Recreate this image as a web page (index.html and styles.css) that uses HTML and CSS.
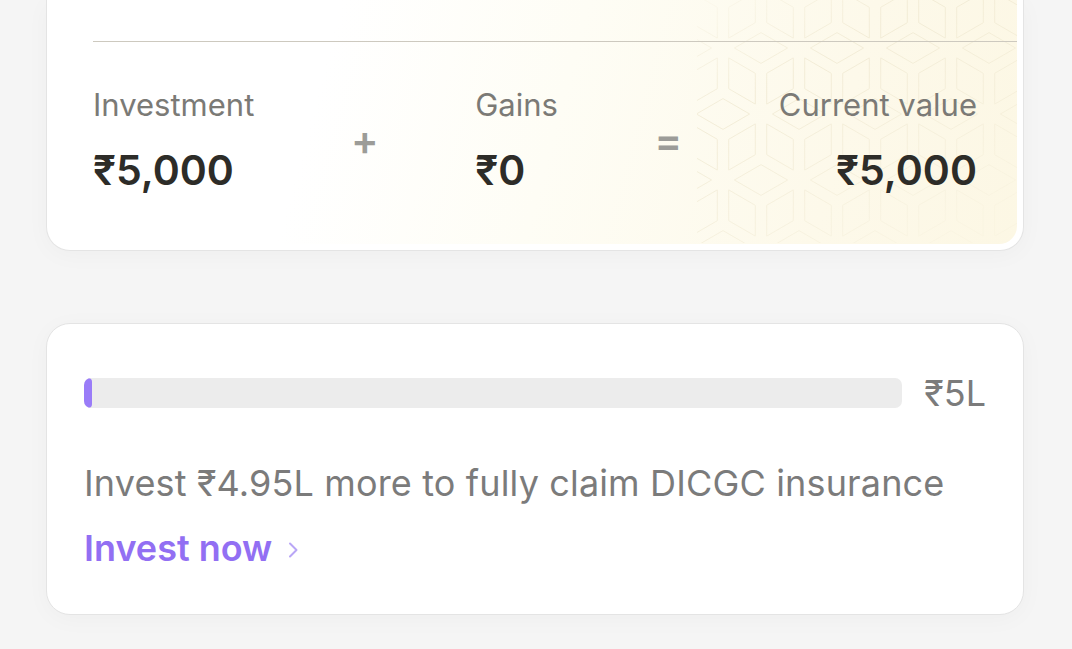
FILE: index.html
```html
<!DOCTYPE html>
<html>
<head>
<meta charset="utf-8">
<link rel="stylesheet" href="styles.css">
</head>
<body>
<div class="page">
  <section class="card summary">
    <div class="panel">
      <svg class="pattern" width="320" height="243" viewBox="0 0 320 243" aria-hidden="true">
        <defs>
          <pattern id="cubes" width="76" height="132" patternUnits="userSpaceOnUse" x="64" y="70">
            <g id="hexes" fill="none" stroke="#efe8d0" stroke-width="1">
              <g id="hx">
                <path d="M0 -37.4 L26.6 -22 L0 -6.6 L-26.6 -22 Z"/>
                <path d="M-32.3 -12.1 L-5.7 3.3 L-5.7 34.1 L-32.3 18.7 Z"/>
                <path d="M32.3 -12.1 L5.7 3.3 L5.7 34.1 L32.3 18.7 Z"/>
              </g>
              <use href="#hx" x="76" y="0"/>
              <use href="#hx" x="38" y="66"/>
              <use href="#hx" x="0" y="132"/>
              <use href="#hx" x="76" y="132"/>
            </g>
          </pattern>
          <linearGradient id="fade" x1="0" y1="0" x2="0.7" y2="1">
            <stop offset="0" stop-color="#fff" stop-opacity="0.1"/>
            <stop offset="0.35" stop-color="#fff" stop-opacity="0.75"/>
            <stop offset="0.7" stop-color="#fff" stop-opacity="0.5"/>
            <stop offset="1" stop-color="#fff" stop-opacity="0.15"/>
          </linearGradient>
          <mask id="m">
            <rect width="320" height="243" fill="url(#fade)"/>
          </mask>
        </defs>
        <rect width="320" height="243" fill="url(#cubes)" mask="url(#m)"/>
      </svg>
      <div class="divider"></div>
      <div class="sum-row">
        <div class="col">
          <div class="label">Investment</div>
          <div class="value">₹5,000</div>
        </div>
        <div class="op">+</div>
        <div class="col">
          <div class="label">Gains</div>
          <div class="value">₹0</div>
        </div>
        <div class="op">=</div>
        <div class="col right">
          <div class="label">Current value</div>
          <div class="value">₹5,000</div>
        </div>
      </div>
    </div>
  </section>

  <section class="card insure">
    <div class="progress-row">
      <div class="track"><div class="fill" style="width:1%"></div></div>
      <div class="limit">₹5L</div>
    </div>
    <p class="note">Invest ₹4.95L more to fully claim DICGC insurance</p>
    <a class="cta" href="#">Invest now <span class="chev"><svg width="14" height="20" viewBox="0 0 14 20"><path d="M4 3.5 L10.5 10 L4 16.5" fill="none" stroke="#b9a6f6" stroke-width="2" stroke-linecap="round" stroke-linejoin="round"/></svg></span></a>
  </section>
</div>
</body>
</html>
```

FILE: styles.css
```css
* { box-sizing: border-box; }
html, body { margin: 0; padding: 0; }
body {
  background: #f5f5f5;
  font-family: "Inter", "Noto Sans", sans-serif;
  width: 1072px;
  height: 649px;
  overflow: hidden;
}
.page {
  padding: 0 48px 0 46px;
  display: flex;
  flex-direction: column;
  gap: 72px;
}
.card {
  background: #fff;
  border: 1px solid #e4e4e4;
  border-radius: 24px;
  box-shadow: 0 4px 24px rgba(0,0,0,0.03);
}
.summary {
  height: 251px;
  border-top: none;
  border-radius: 0 0 24px 24px;
  padding: 0 6px 6px 6px;
}
.panel {
  position: relative;
  height: 100%;
  border-radius: 0 0 18px 18px;
  background: linear-gradient(105deg, #ffffff 28%, #fefdf5 52%, #fdf9ea 80%, #fcf7e4 100%);
  padding-left: 40px;
  overflow: hidden;
}
.pattern {
  position: absolute;
  right: 0;
  top: 0;
}
.divider {
  position: relative;
  margin-top: 41px;
  height: 1px;
  background: #cdc9bf;
}
.sum-row {
  position: relative;
  display: flex;
  justify-content: space-between;
  align-items: center;
  padding-right: 40px;
  margin-top: 43px;
}
.col { display: flex; flex-direction: column; gap: 21px; }
.col.right { align-items: flex-end; }
.label {
  font-size: 31px;
  line-height: 40px;
  color: #7b7a76;
}
.value {
  font-size: 41px;
  line-height: 48px;
  font-weight: 600;
  color: #2d2c28;
}
.op {
  font-size: 41px;
  font-weight: 600;
  color: #9c9c98;
  line-height: 40px;
  margin-top: 0;
}
.insure {
  height: 292px;
  padding: 53px 37px 0 37px;
}
.progress-row {
  display: flex;
  align-items: center;
  gap: 22px;
}
.track {
  flex: 1;
  height: 30px;
  background: #ececec;
  border-radius: 7px;
  overflow: hidden;
}
.fill {
  height: 100%;
  min-width: 8px;
  background: #9a7cf8;
  border-radius: 4px;
}
.limit {
  font-size: 36px;
  line-height: 32px;
  color: #7b7b7b;
}
.note {
  margin: 54px 0 0 0;
  font-size: 36px;
  line-height: 40px;
  color: #7b7b7b;
  letter-spacing: 0.15px;
}
.cta {
  display: inline-flex;
  align-items: center;
  gap: 14px;
  margin-top: 25px;
  font-size: 36px;
  line-height: 40px;
  font-weight: 600;
  color: #926ff3;
  text-decoration: none;
}
.chev { display: inline-flex; margin-top: 4px; }
```
